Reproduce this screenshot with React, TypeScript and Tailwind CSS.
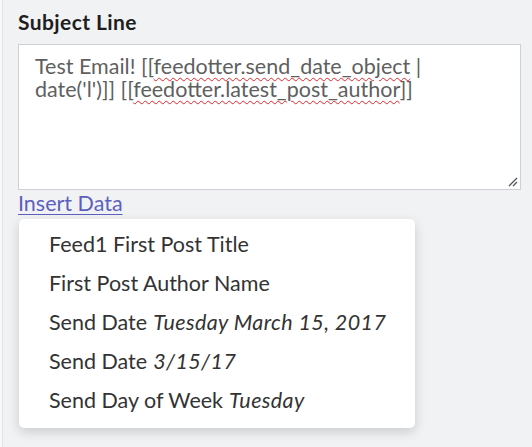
import React from "react";

const items: { label: string; value?: string }[] = [
  { label: "Feed1 First Post Title" },
  { label: "First Post Author Name" },
  { label: "Send Date", value: "Tuesday March 15, 2017" },
  { label: "Send Date", value: "3/15/17" },
  { label: "Send Day of Week", value: "Tuesday" },
];

function Misspelled({ children }: { children: React.ReactNode }) {
  return (
    <span className="underline decoration-wavy decoration-[#e8232a] decoration-1 underline-offset-[3px]">
      {children}
    </span>
  );
}

export default function App() {
  return (
    <div className="w-[532px] h-[447px] bg-[#f1f2f4] font-['Lato',sans-serif] flex overflow-hidden">
      <div className="w-[3px] bg-[#f7f8f9] border-r border-[#e2e3e6]" />
      <div className="flex-1 pl-[15px] pr-[11px] pt-[9px]">
        <h2 className="text-[21px] font-bold tracking-[0.4px] text-[#1e1e1e] leading-[26px]">Subject Line</h2>
        <div className="relative mt-[9px] h-[146px] bg-white border border-[#cfd0d3] pl-[16px] pr-2 pt-[10px] text-[21.5px] leading-[23px] text-[#5f5f5f] whitespace-nowrap">
          Test Email! [[<Misspelled>feedotter.send_date_object</Misspelled> |
          <br />
          date('l')]] [[<Misspelled>feedotter.latest_post_author</Misspelled>]]
          <svg className="absolute right-[2px] bottom-[2px]" width="12" height="12" viewBox="0 0 12 12">
            <path d="M11 3 L3 11 M11 7 L7 11" stroke="#555" strokeWidth="1.3" />
          </svg>
        </div>
        <a href="#" className="block w-fit text-[21.5px] leading-[25px] mt-[1px] text-[#5c5fc0] underline underline-offset-[3px] decoration-1">
          Insert Data
        </a>
        <div className="mt-[3px] ml-px w-[396px] bg-white rounded-[5px] shadow-[0_4px_12px_rgba(0,0,0,0.16)] pt-[6px] pb-[8px]">
          {items.map((it, i) => (
            <div key={i} className="h-[39px] flex items-center pl-[30px] text-[21.5px] text-[#333] whitespace-nowrap">
              <span>{it.label}</span>
              {it.value && <em className="ml-[6px] italic tracking-[0.4px]">{it.value}</em>}
            </div>
          ))}
        </div>
      </div>
    </div>
  );
}
